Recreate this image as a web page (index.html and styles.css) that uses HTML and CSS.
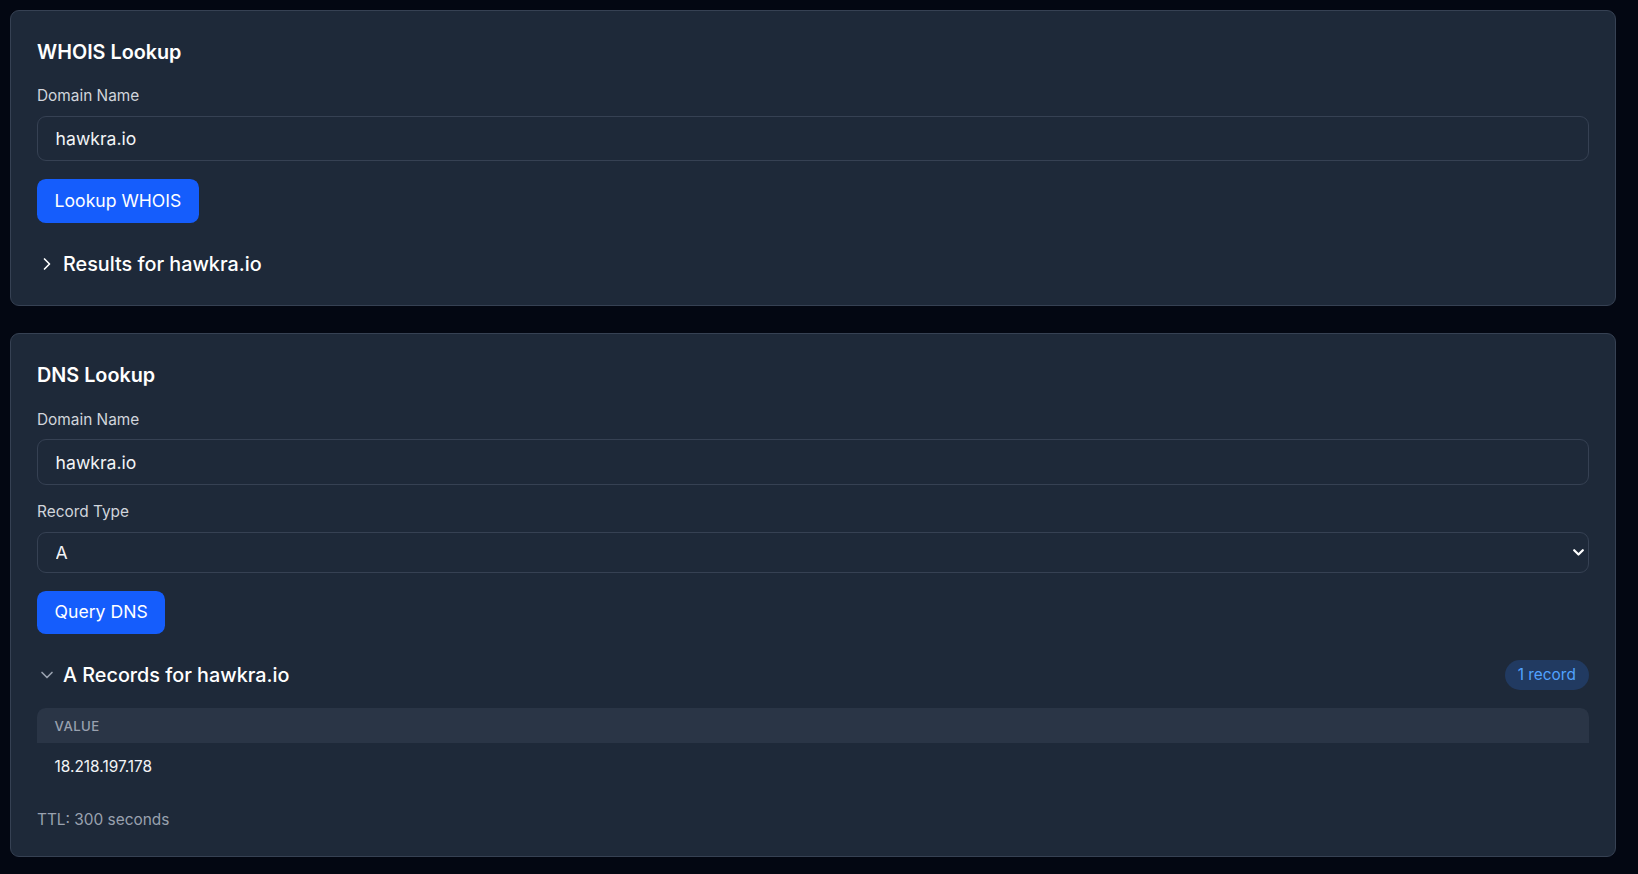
FILE: index.html
```html
<!DOCTYPE html>
<html lang="en">
<head>
<meta charset="utf-8">
<title>Lookup Tools</title>
<link rel="stylesheet" href="styles.css">
</head>
<body>
<main class="page">
  <section class="card card-whois">
    <h2 class="card-title">WHOIS Lookup</h2>
    <div class="field">
      <label class="field-label" for="whois-domain">Domain Name</label>
      <input class="text-input" id="whois-domain" type="text" value="hawkra.io">
    </div>
    <button class="btn-primary" type="button">Lookup WHOIS</button>
    <div class="result-head">
      <button class="toggle" type="button">
        <svg class="toggle-icon toggle-icon-open" width="20" height="20" viewBox="0 0 24 24" fill="none" stroke="currentColor" stroke-width="2" stroke-linecap="round" stroke-linejoin="round"><path d="m9 18 6-6-6-6"/></svg>
        <span>Results for hawkra.io</span>
      </button>
    </div>
  </section>

  <section class="card card-dns">
    <h2 class="card-title">DNS Lookup</h2>
    <div class="field">
      <label class="field-label" for="dns-domain">Domain Name</label>
      <input class="text-input" id="dns-domain" type="text" value="hawkra.io">
    </div>
    <div class="field">
      <label class="field-label" for="dns-type">Record Type</label>
      <div class="select-wrap">
        <select class="select-input" id="dns-type">
          <option selected>A</option>
          <option>AAAA</option>
          <option>CNAME</option>
          <option>MX</option>
          <option>NS</option>
          <option>TXT</option>
        </select>
        <svg class="select-arrow" width="11" height="7" viewBox="0 0 11 7" fill="none" stroke="currentColor" stroke-width="2.2" stroke-linecap="round" stroke-linejoin="round"><path d="M1.2 1.2 5.5 5.5 9.8 1.2"/></svg>
      </div>
    </div>
    <button class="btn-primary" type="button">Query DNS</button>
    <div class="result-head result-head-dns">
      <button class="toggle" type="button">
        <svg class="toggle-icon toggle-icon-muted" width="20" height="20" viewBox="0 0 24 24" fill="none" stroke="currentColor" stroke-width="2" stroke-linecap="round" stroke-linejoin="round"><path d="m6 9 6 6 6-6"/></svg>
        <span>A Records for hawkra.io</span>
      </button>
      <span class="badge">1 record</span>
    </div>
    <div class="records">
      <table class="records-table">
        <thead>
          <tr><th>Value</th></tr>
        </thead>
        <tbody>
          <tr><td>18.218.197.178</td></tr>
        </tbody>
      </table>
    </div>
    <p class="ttl">TTL: 300 seconds</p>
  </section>
</main>
</body>
</html>
```

FILE: styles.css
```css
html, body {
  margin: 0;
  padding: 0;
}

body {
  background: #030712;
  color: #f3f4f6;
  font-family: Inter, "Noto Sans", "Liberation Sans", sans-serif;
}

.page {
  display: flex;
  flex-direction: column;
  gap: 27px;
  padding: 10px 22px 10px 10px;
}

.card {
  display: flex;
  flex-direction: column;
  background: #1e2939;
  border: 1px solid #364153;
  border-radius: 9px;
  padding: 27px 26px 27.5px 26px;
}

.card-dns {
  padding-bottom: 25.2px;
}

.card-title {
  margin: 0;
  font-size: 19.8px;
  line-height: 29.7px;
  font-weight: 600;
  color: #ffffff;
}

.field {
  display: flex;
  flex-direction: column;
  gap: 8.8px;
  margin-top: 17.4px;
}

.field + .field {
  margin-top: 16.6px;
}

.field-label {
  font-size: 15.4px;
  line-height: 22px;
  color: #d1d5dc;
}

.text-input {
  box-sizing: border-box;
  width: 100%;
  height: 45.4px;
  margin: 0;
  padding: 0 17.6px;
  background: #1e2939;
  border: 1px solid #364153;
  border-radius: 9px;
  color: #f3f4f6;
  font-family: inherit;
  font-size: 17.6px;
  outline: none;
}

.select-wrap {
  position: relative;
}

.select-input {
  -webkit-appearance: none;
  appearance: none;
  box-sizing: border-box;
  display: block;
  width: 100%;
  height: 40.7px;
  margin: 0;
  padding: 0 17.6px;
  background: #1e2939;
  border: 1px solid #364153;
  border-radius: 9px;
  color: #f3f4f6;
  font-family: inherit;
  font-size: 17.6px;
  outline: none;
}

.select-arrow {
  position: absolute;
  right: 5.5px;
  top: 17px;
  color: #ffffff;
  pointer-events: none;
}

.btn-primary {
  align-self: flex-start;
  margin-top: 17.7px;
  padding: 8.65px 17.6px;
  background: #155dfc;
  color: #ffffff;
  border: 0;
  border-radius: 8.8px;
  font-family: inherit;
  font-size: 17.6px;
  line-height: 26.4px;
  cursor: pointer;
}

.result-head {
  display: flex;
  align-items: center;
  justify-content: space-between;
  margin-top: 27.3px;
}

.result-head-dns {
  margin-top: 26.2px;
}

.toggle {
  display: flex;
  align-items: center;
  gap: 6px;
  padding: 0;
  background: none;
  border: 0;
  color: #ffffff;
  font-family: inherit;
  font-size: 19.8px;
  line-height: 28px;
  font-weight: 500;
  cursor: pointer;
}

.toggle-icon {
  flex: none;
}

.toggle-icon-open {
  color: #ffffff;
}

.toggle-icon-muted {
  color: #99a1af;
}

.badge {
  padding: 4px 13.2px;
  background: #213a61;
  color: #51a2ff;
  border-radius: 999px;
  font-size: 15.4px;
  line-height: 22px;
}

.records {
  margin-top: 17.7px;
  border-radius: 8.8px;
  overflow: hidden;
}

.records-table {
  width: 100%;
  border-collapse: collapse;
}

.records-table th {
  height: 35px;
  padding: 0 17.6px;
  background: #2a3546;
  text-align: left;
  font-size: 13.2px;
  line-height: 16px;
  font-weight: 500;
  letter-spacing: 0.03em;
  text-transform: uppercase;
  color: #99a1af;
}

.records-table td {
  padding: 13px 17.6px;
  font-size: 15.4px;
  line-height: 22px;
  color: #f3f4f6;
}

.ttl {
  margin: 17.6px 0 0;
  font-size: 15.4px;
  line-height: 22px;
  color: #99a1af;
}
```
